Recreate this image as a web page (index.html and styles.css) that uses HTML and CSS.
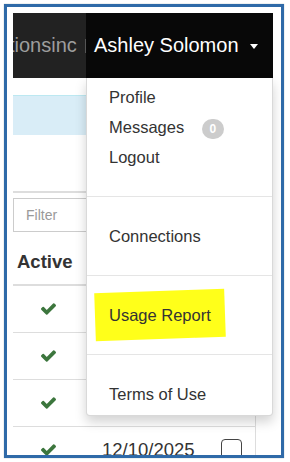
FILE: index.html
```html
<!DOCTYPE html>
<html lang="en">
<head>
    <meta charset="UTF-8">
    <meta name="viewport" content="width=device-width, initial-scale=1.0">
    <title>Usage Report menu</title>
    <link rel="stylesheet" href="styles.css">
</head>
<body>
    <div class="frame">
        <nav class="navbar">
            <div class="brand">
                <span class="brand-text">tionsinc</span>
                <span class="sep"></span>
            </div>
            <div class="user">
                <a class="user-toggle" href="#">Ashley Solomon <span class="caret"></span></a>
                <ul class="dropdown">
                    <li><a href="#">Profile</a></li>
                    <li><a href="#">Messages <span class="badge">0</span></a></li>
                    <li><a href="#">Logout</a></li>
                    <li class="divider"></li>
                    <li><a href="#">Connections</a></li>
                    <li class="divider"></li>
                    <li><a href="#"><span class="marker">Usage Report</span></a></li>
                    <li class="divider"></li>
                    <li><a href="#">Terms of Use</a></li>
                </ul>
            </div>
        </nav>

        <div class="alert"></div>
        <hr class="rule">
        <input class="filter" type="text" placeholder="Filter">

        <table class="grid">
            <colgroup>
                <col class="col-active">
                <col class="col-date">
                <col class="col-pick">
            </colgroup>
            <thead>
                <tr><th>Active</th><th></th><th></th></tr>
            </thead>
            <tbody>
                <tr>
                    <td class="check"><svg viewBox="121 334 1550 1188" width="15" height="12"><path d="M1671 566q0 40-28 68l-724 724-136 136q-28 28-68 28t-68-28l-136-136-362-362q-28-28-28-68t28-68l136-136q28-28 68-28t68 28l294 295 656-657q28-28 68-28t68 28l136 136q28 28 28 68z"/></svg></td>
                    <td></td>
                    <td class="pick"><span class="box"></span></td>
                </tr>
                <tr>
                    <td class="check"><svg viewBox="121 334 1550 1188" width="15" height="12"><path d="M1671 566q0 40-28 68l-724 724-136 136q-28 28-68 28t-68-28l-136-136-362-362q-28-28-28-68t28-68l136-136q28-28 68-28t68 28l294 295 656-657q28-28 68-28t68 28l136 136q28 28 28 68z"/></svg></td>
                    <td></td>
                    <td class="pick"><span class="box"></span></td>
                </tr>
                <tr>
                    <td class="check"><svg viewBox="121 334 1550 1188" width="15" height="12"><path d="M1671 566q0 40-28 68l-724 724-136 136q-28 28-68 28t-68-28l-136-136-362-362q-28-28-28-68t28-68l136-136q28-28 68-28t68 28l294 295 656-657q28-28 68-28t68 28l136 136q28 28 28 68z"/></svg></td>
                    <td></td>
                    <td class="pick"><span class="box"></span></td>
                </tr>
                <tr>
                    <td class="check"><svg viewBox="121 334 1550 1188" width="15" height="12"><path d="M1671 566q0 40-28 68l-724 724-136 136q-28 28-68 28t-68-28l-136-136-362-362q-28-28-28-68t28-68l136-136q28-28 68-28t68 28l294 295 656-657q28-28 68-28t68 28l136 136q28 28 28 68z"/></svg></td>
                    <td>12/10/2025</td>
                    <td class="pick"><span class="box"></span></td>
                </tr>
            </tbody>
        </table>
    </div>
</body>
</html>
```

FILE: styles.css
```css
* {
    box-sizing: border-box;
}
body {
    margin: 0;
    font-family: "Liberation Sans", Arial, sans-serif;
    color: #333;
    background: #fff;
}
a {
    color: inherit;
    text-decoration: none;
}
.frame {
    margin: 4px;
    width: 280px;
    height: 454px;
    border: 3px solid #2f6aa8;
    padding: 6px 8px 0 6px;
    overflow: hidden;
    box-shadow: 0 0 1px #9aa;
}

/* top bar */
.navbar {
    display: flex;
    height: 65px;
}
.brand {
    width: 73px;
    background: #222;
    display: flex;
    align-items: center;
    overflow: hidden;
}
.brand-text {
    margin-left: -4px;
    font-size: 20px;
    color: #9d9d9d;
    white-space: nowrap;
}
.sep {
    flex-shrink: 0;
    width: 1px;
    height: 14px;
    margin-left: 8px;
    background: #555;
}
.user {
    flex: 1;
    position: relative;
    display: flex;
    align-items: center;
    padding-left: 8px;
    background: #080808;
}
.user-toggle {
    color: #fff;
    font-size: 20px;
    white-space: nowrap;
}
.caret {
    display: inline-block;
    margin-left: 6px;
    vertical-align: middle;
    border-top: 5px solid #fff;
    border-left: 4px solid transparent;
    border-right: 4px solid transparent;
}

/* open menu */
.dropdown {
    position: absolute;
    top: 100%;
    left: 0;
    right: 0;
    z-index: 10;
    margin: 0;
    padding: 4px 0 6px;
    list-style: none;
    background: #fff;
    border: 1px solid rgba(0, 0, 0, 0.15);
    border-top: 0;
    border-radius: 0 0 4px 4px;
    box-shadow: 0 6px 12px rgba(0, 0, 0, 0.175);
}
.dropdown a {
    display: block;
    padding: 0 22px;
    line-height: 30px;
    font-size: 16.5px;
    color: #333;
    white-space: nowrap;
}
.dropdown .divider {
    height: 1px;
    margin: 24px 0;
    background: #e5e5e5;
}
.badge {
    display: inline-block;
    min-width: 22px;
    margin-left: 13px;
    padding: 4px 7px;
    font-size: 12px;
    font-weight: bold;
    line-height: 1;
    color: #fff;
    text-align: center;
    vertical-align: middle;
    background: #ccc;
    border-radius: 10px;
}
.marker {
    position: relative;
    z-index: 0;
    display: inline-block;
}
.marker::before {
    content: "";
    position: absolute;
    top: -9px;
    bottom: -9px;
    left: -14px;
    right: -14px;
    z-index: -1;
    background: #ffff1a;
    transform: rotate(-2deg);
}

/* page body */
.alert {
    margin-top: 17px;
    height: 40px;
    background: #d9edf7;
    border-top: 1px solid #bce8f1;
}
.rule {
    margin: 56px 0 0;
    border: 0;
    border-top: 2px solid #ddd;
}
.filter {
    display: block;
    width: 200px;
    height: 34px;
    margin-top: 5px;
    padding: 0 12px;
    font-family: inherit;
    font-size: 14px;
    border: 1px solid #ccc;
}
.filter::placeholder {
    color: #999;
}

.grid {
    margin-top: 8px;
    width: 242px;
    border-collapse: collapse;
    border-right: 1px solid #ddd;
    table-layout: fixed;
}
.col-active { width: 81px; }
.col-date { width: 116px; }
.col-pick { width: 45px; }
.grid th {
    padding: 12px 4px;
    line-height: 20px;
    font-size: 18.5px;
    text-align: left;
    border-bottom: 2px solid #ddd;
}
.grid td {
    height: 47px;
    padding: 0 8px;
    line-height: 20px;
    font-size: 18.5px;
    white-space: nowrap;
    vertical-align: middle;
    border-top: 1px solid #ddd;
}
.grid td.check {
    padding-left: 28px;
}
.check svg {
    display: block;
    fill: #3c763d;
}
.grid td.pick {
    padding-left: 11px;
}
.box {
    display: block;
    width: 21px;
    height: 21px;
    border: 1px solid #444;
    border-radius: 4px;
}
```
